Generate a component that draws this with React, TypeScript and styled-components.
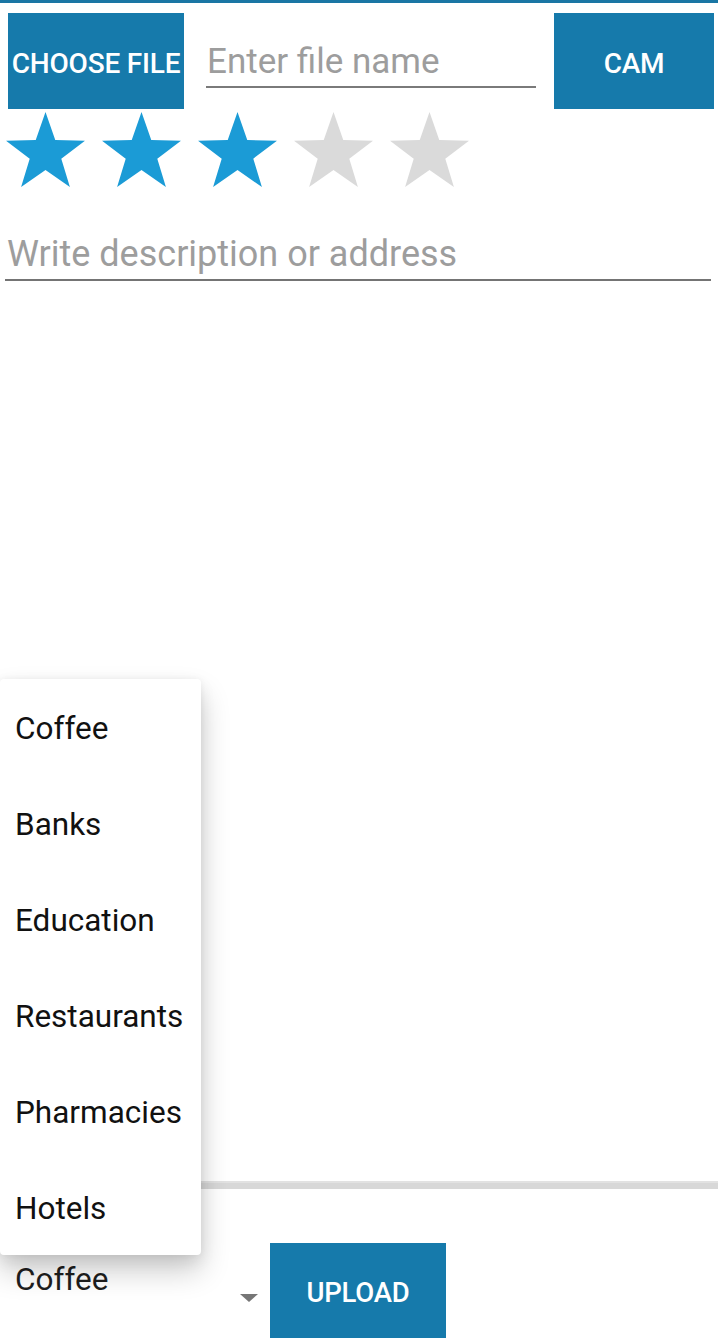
import React from "react";
import styled, { createGlobalStyle } from "styled-components";

const Global = createGlobalStyle`
  html, body {
    margin: 0;
    padding: 0;
    background: #ffffff;
    height: 1338px;
    overflow: hidden;
  }
  body {
    font-family: Roboto, "Noto Sans", "Liberation Sans", sans-serif;
  }
  * { box-sizing: border-box; }
`;

const Page = styled.div`
  position: relative;
  height: 1338px;
  display: flex;
  flex-direction: column;
  border-top: 3px solid #1a76a4;
  overflow: hidden;
`;

const TopRow = styled.div`
  display: flex;
  align-items: flex-start;
  margin-top: 10px;
  padding: 0 4px 0 8px;
  height: 96px;
`;

const ActionButton = styled.button<{ $w: number }>`
  width: ${(p) => p.$w}px;
  height: 96px;
  flex: none;
  border: none;
  border-radius: 0;
  background: #167aab;
  color: #ffffff;
  font-family: Roboto, "Liberation Sans", sans-serif;
  font-weight: 500;
  font-size: 28px;
  text-transform: uppercase;
  padding: 4px 0 0;
  display: flex;
  align-items: center;
  justify-content: center;
  white-space: nowrap;
  letter-spacing: -0.2px;
`;

const FileNameInput = styled.input`
  flex: 1;
  margin: 28px 18px 0 22px;
  min-width: 0;
  border: none;
  border-bottom: 2px solid #7a7a7a;
  outline: none;
  padding: 0 0 4px 1px;
  font-family: Roboto, "Liberation Sans", sans-serif;
  font-size: 35px;
  line-height: 41px;
  height: 47px;
  color: #222;
  background: transparent;
  &::placeholder {
    color: #9d9d9d;
  }
`;

const Stars = styled.div`
  display: flex;
  gap: 17px;
  padding-left: 6px;
  margin-top: 3px;
  height: 77px;
`;

const DescInput = styled.input`
  margin: 44px 7px 0 5px;
  border: none;
  border-bottom: 2px solid #747474;
  outline: none;
  padding: 0 0 4px 2px;
  font-family: Roboto, "Liberation Sans", sans-serif;
  font-size: 36px;
  line-height: 42px;
  height: 48px;
  color: #222;
  background: transparent;
  &::placeholder {
    color: #9d9d9d;
  }
`;

const MapArea = styled.div`
  flex: 1;
`;

const Divider = styled.div`
  height: 8px;
  background: #d8d8d8;
  border-top: 2px solid #e2e2e2;
  flex: none;
`;

const BottomRow = styled.div`
  display: flex;
  align-items: flex-start;
  margin-top: 54px;
  padding-left: 15px;
  height: 95px;
  flex: none;
`;

const SelectBox = styled.div`
  width: 243px;
  display: flex;
  align-items: flex-start;
`;

const SelectValue = styled.span`
  margin-top: 19px;
  font-size: 31.5px;
  line-height: 36px;
  color: #1e1e1e;
  flex: 1;
`;

const Arrow = styled.span`
  margin-top: 51px;
  width: 0;
  height: 0;
  border-left: 9px solid transparent;
  border-right: 9px solid transparent;
  border-top: 8px solid #767676;
`;

const UploadButton = styled(ActionButton)`
  margin-left: 12px;
  height: 95px;
  font-size: 27.5px;
`;

const Menu = styled.ul`
  position: absolute;
  left: 0;
  top: 676px;
  width: 201px;
  margin: 0;
  padding: 0;
  list-style: none;
  background: #ffffff;
  border-radius: 4px;
  box-shadow: 0 16px 30px rgba(0, 0, 0, 0.2), 0 6px 16px rgba(0, 0, 0, 0.08),
    0 0 6px rgba(0, 0, 0, 0.04);
`;

const MenuItem = styled.li`
  height: 96px;
  display: flex;
  align-items: center;
  padding: 3px 0 0 15px;
  font-size: 31.5px;
  color: #111111;
  white-space: nowrap;
`;

const Star: React.FC<{ filled: boolean }> = ({ filled }) => {
  const cx = 39.5;
  const cy = 41.5;
  const R = 41.5;
  const r = R * 0.4;
  const pts: string[] = [];
  for (let i = 0; i < 10; i++) {
    const rad = i % 2 === 0 ? R : r;
    const a = (Math.PI / 5) * i - Math.PI / 2;
    pts.push(`${(cx + rad * Math.cos(a)).toFixed(2)},${(cy + rad * Math.sin(a)).toFixed(2)}`);
  }
  return (
    <svg width="79" height="77" viewBox="0 0 79 77">
      <polygon points={pts.join(" ")} fill={filled ? "#1b9bd6" : "#dadada"} />
    </svg>
  );
};

const categories = ["Coffee", "Banks", "Education", "Restaurants", "Pharmacies", "Hotels"];

export default function App() {
  return (
    <>
      <Global />
      <Page>
        <TopRow>
          <ActionButton $w={176}>Choose File</ActionButton>
          <FileNameInput placeholder="Enter file name" />
          <ActionButton $w={160}>Cam</ActionButton>
        </TopRow>
        <Stars>
          {[0, 1, 2, 3, 4].map((i) => (
            <Star key={i} filled={i < 3} />
          ))}
        </Stars>
        <DescInput placeholder="Write description or address" />
        <MapArea />
        <Divider />
        <BottomRow>
          <SelectBox>
            <SelectValue>Coffee</SelectValue>
            <Arrow />
          </SelectBox>
          <UploadButton $w={176}>Upload</UploadButton>
        </BottomRow>
        <Menu>
          {categories.map((c) => (
            <MenuItem key={c}>{c}</MenuItem>
          ))}
        </Menu>
      </Page>
    </>
  );
}
